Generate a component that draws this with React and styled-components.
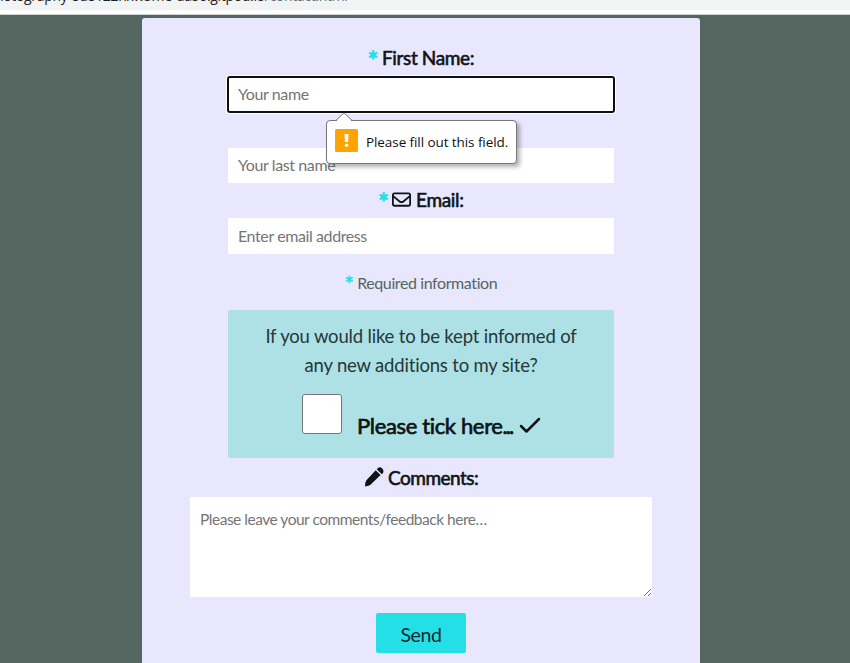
import React from 'react';
import styled, { createGlobalStyle } from 'styled-components';
import { FaRegEnvelope } from 'react-icons/fa6';

const GlobalStyle = createGlobalStyle`
  * { box-sizing: border-box; }
  html, body { margin: 0; height: 663px; overflow: hidden; }
  body {
    background: #54665f;
    font-family: Lato, sans-serif;
    font-variant-ligatures: none;
    color: #0f1416;
  }
  input, textarea, button { font-family: inherit; margin: 0; }
`;

const Page = styled.div`
  height: 663px;
  overflow: hidden;
  display: flex;
  flex-direction: column;
`;

const AddressBar = styled.div`
  flex: none;
  height: 15px;
  background: #f1f3f4;
  border-bottom: 1px solid #cfd3d2;
  box-shadow: inset 0 -4px 0 #fff;
  overflow: hidden;
`;

const Url = styled.div`
  display: flex;
  margin: -14px 0 0 -5px;
  font: 14px/20px 'Open Sans', sans-serif;
  letter-spacing: -0.33px;
  white-space: nowrap;
  color: #202124;
`;

const UrlPath = styled.span`
  color: #5f6f80;
`;

const Card = styled.form`
  flex: none;
  width: 558px;
  height: 660px;
  margin: 3px 0 0 142px;
  padding-top: 24px;
  border-radius: 3px;
  background: #e9e7fe;
  display: flex;
  flex-direction: column;
  align-items: center;
`;

const Star = styled.span`
  color: #24e0e6;
  font-size: 1.3em;
  line-height: 1;
  -webkit-text-stroke: 1.1px currentColor;
`;

const Label = styled.label`
  height: 31px;
  margin: ${(p) => p.$margin || 0};
  padding-bottom: 1px;
  display: flex;
  align-items: center;
  font-size: 19px;
  line-height: 29px;
  letter-spacing: ${(p) => p.$spacing || 0}px;
  -webkit-text-stroke: 0.6px currentColor;
  white-space: pre;
  svg { flex: none; -webkit-text-stroke: 0; }
  ${Star} { margin-right: 4px; padding-top: 8px; }
`;

const Field = styled.input`
  width: 386px;
  height: ${(p) => p.$height || 35}px;
  margin-top: ${(p) => p.$top || 0}px;
  padding: 0 10px 2px;
  border: 0;
  border-radius: 0;
  background: #fff;
  font-size: 16px;
  letter-spacing: -0.4px;
  outline: none;
  &::placeholder { color: #757575; opacity: 1; }
`;

const RequiredField = styled.div`
  position: relative;
  height: 35px;
  margin-top: 4px;
  ${Field} {
    border-radius: 2px;
    outline: 2px solid #101010;
    outline-offset: -1px;
    box-shadow: 0 0 0 2px #fff;
  }
`;

const Tooltip = styled.div`
  position: absolute;
  z-index: 2;
  left: 98px;
  top: 43px;
  width: 191px;
  height: 44px;
  padding-left: 8px;
  display: flex;
  align-items: center;
  gap: 8px;
  border: 1px solid #767676;
  border-radius: 4px;
  background: #fff;
  box-shadow: 3px 3px 4px rgba(0, 0, 0, 0.3);
  font: 13.5px/20px 'Open Sans', sans-serif;
  letter-spacing: -0.08px;
  color: #111;
  white-space: nowrap;
`;

const Arrow = styled.svg`
  position: absolute;
  left: 8px;
  top: -9px;
`;

const Alert = styled.svg`
  flex: none;
  margin-top: -3px;
`;

const Note = styled.p`
  height: 24px;
  margin: 17px 0 0;
  display: flex;
  justify-content: center;
  font-size: 16px;
  line-height: 23px;
  letter-spacing: -0.4px;
  color: #54665f;
  ${Star} {
    margin: 3px 4px 0 0;
    -webkit-text-stroke-width: 0.7px;
  }
`;

const Subscribe = styled.section`
  width: 386px;
  height: 148px;
  margin-top: 15px;
  padding-top: 12px;
  border-radius: 2px;
  background: #aee1e5;
`;

const Question = styled.p`
  margin: 0;
  display: flex;
  flex-direction: column;
  align-items: center;
  font-size: 18.5px;
  line-height: 29px;
  letter-spacing: -0.18px;
  color: #24383b;
  white-space: nowrap;
`;

const Line = styled.span``;

const TickRow = styled.label`
  display: flex;
  margin: 14px 0 0 74px;
  font-size: 22px;
  line-height: 32px;
  -webkit-text-stroke: 0.7px currentColor;
  letter-spacing: -0.35px;
  white-space: nowrap;
`;

const Checkbox = styled.input.attrs({ type: 'checkbox' })`
  appearance: none;
  flex: none;
  width: 40px;
  height: 40px;
  background: #fff;
  border: 1px solid #767676;
  border-radius: 3px;
`;

const TickText = styled.span`
  margin: 16px 0 0 15px;
  width: 158px;
`;

const Dots = styled.span`
  letter-spacing: -2px;
`;

const TickIcon = styled.svg`
  flex: none;
  margin: 23px 0 0 4px;
`;

const Comments = styled.textarea`
  flex: none;
  width: 462px;
  height: 100px;
  margin-top: 4px;
  padding: 9px 10px;
  border: 0;
  outline: none;
  background: #fff;
  font-size: 15.5px;
  line-height: 26px;
  letter-spacing: -0.48px;
  resize: both;
  &::placeholder { color: #757575; opacity: 1; }
`;

const Send = styled.button`
  flex: none;
  width: 90px;
  height: 40px;
  margin-top: 16px;
  padding: 2px 0 0;
  border: 0;
  border-radius: 2px;
  background: #24e0e6;
  color: #12292c;
  font-size: 19.5px;
  letter-spacing: -0.4px;
`;

export default function App() {
  return (
    <>
      <GlobalStyle />
      <Page>
        <AddressBar>
          <Url>hotography-8d8122nxw5me-da50.gitpod.io<UrlPath>/contact.html</UrlPath></Url>
        </AddressBar>
        <Card noValidate>
          <Label $spacing={-0.35}><Star>*</Star>First Name:</Label>
          <RequiredField>
            <Field placeholder="Your name" />
            <Tooltip role="alert">
              <Arrow width="18" height="10" viewBox="0 0 18 10">
                <path d="M1 9.5 9 1l8 8.5V10H1z" fill="#fff" />
                <path d="M1 8.5 9 .8l8 7.7" fill="none" stroke="#767676" />
              </Arrow>
              <Alert width="23" height="23" viewBox="0 0 23 23">
                <rect width="23" height="23" rx="1.5" fill="#ffa300" />
                <path d="M9.5 5h4l-.4 8H9.9z" fill="#fff" />
                <circle cx="11.5" cy="16.3" r="1.8" fill="#fff" />
              </Alert>
              Please fill out this field.
            </Tooltip>
          </RequiredField>
          <Field $top={36} placeholder="Your last name" />
          <Label $margin="1px 0 3px" $spacing={-0.3}>
            <Star>*</Star><FaRegEnvelope size={19} /> Email:
          </Label>
          <Field $height={36} placeholder="Enter email address" />
          <Note><Star>*</Star>Required information</Note>
          <Subscribe>
            <Question>
              <Line>If you would like to be kept informed of</Line>
              <Line>any new additions to my site?</Line>
            </Question>
            <TickRow>
              <Checkbox />
              <TickText>Please tick here<Dots>...</Dots></TickText>
              <TickIcon width="22" height="18" viewBox="0 0 22 18">
                <path d="m2 9 5.5 5.5L20 2" fill="none" stroke="#0f1416" strokeWidth="2.5" strokeLinecap="round" strokeLinejoin="round" />
              </TickIcon>
            </TickRow>
          </Subscribe>
          <Label $margin="4px 0 0" $spacing={-0.5}>
            <svg width="20" height="20" viewBox="0 0 20 20" fill="#0f1416">
              <path d="m11.7 3.2 4.9 4.9L6.5 17.8Q5 19 1 19.4q0-4 1.2-6zM12.8 2.2 14 1q2.2-1.5 4.2.5t.8 4.5l-1.2 1.2z" />
            </svg> Comments:
          </Label>
          <Comments placeholder="Please leave your comments/feedback here…" />
          <Send type="button">Send</Send>
        </Card>
      </Page>
    </>
  );
}
